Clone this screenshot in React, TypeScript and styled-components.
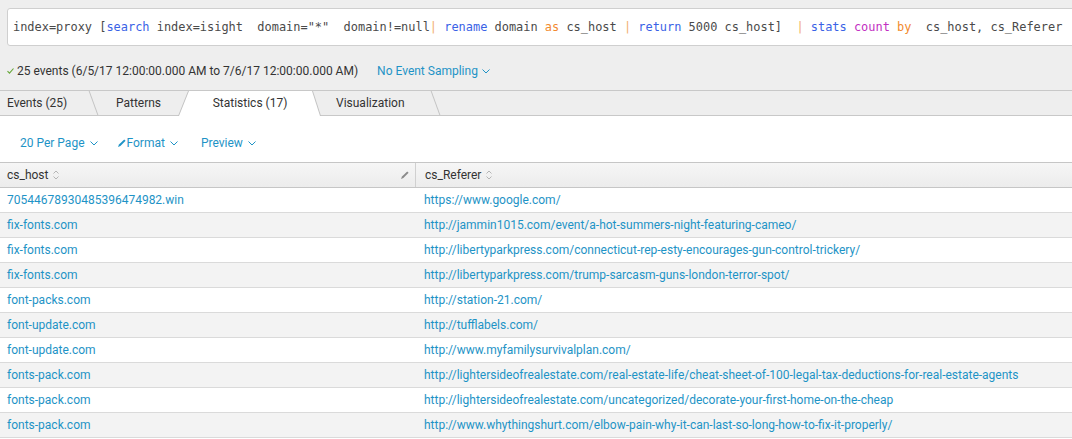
import React from "react";
import styled, { createGlobalStyle, css } from "styled-components";

const GlobalStyle = createGlobalStyle`
  html, body { margin: 0; padding: 0; background: #fff; overflow: hidden; }
  body { font-family: Roboto, "Liberation Sans", Arial, sans-serif; }
`;

const Page = styled.div`
  width: 1072px;
  height: 439px;
  overflow: hidden;
  background: #fff;
`;

const TopArea = styled.div`
  background: #eeeeee;
`;

const SearchWrap = styled.div`
  padding: 8px 0 0 7px;
`;

const SearchBox = styled.div`
  box-sizing: border-box;
  height: 38px;
  margin-right: -30px;
  background: #fff;
  border: 1px solid #cfcfcf;
  border-radius: 3px;
  display: flex;
  align-items: center;
  padding: 0 0 1px 5px;
  overflow: hidden;
`;

const SearchText = styled.span`
  font-family: "DejaVu Sans Mono", "Liberation Mono", monospace;
  font-size: 11.95px;
  color: #4a4a4a;
  white-space: pre;
`;

const Tok = styled.span<{ $k: "cmd" | "kw" | "fn" | "pipe" }>`
  color: ${(p) =>
    p.$k === "cmd" ? "#3a62e6" : p.$k === "kw" ? "#f28a2e" : p.$k === "fn" ? "#c22fc2" : "#f2ae6e"};
`;

const StatusRow = styled.div`
  height: 26px;
  margin-top: 12px;
  padding-left: 7px;
  display: flex;
  align-items: center;
  font-size: 12px;
  color: #333;
`;

const StatusText = styled.span`
  margin-left: 3px;
`;

const SamplingLink = styled.span`
  margin-left: 19px;
  color: #1e93c6;
  display: inline-flex;
  align-items: center;
  gap: 4px;
`;

const TabBar = styled.div`
  box-sizing: border-box;
  margin-top: 6px;
  height: 26px;
  border-top: 1px solid #c8c8c8;
  border-bottom: 1px solid #c8c8c8;
  display: flex;
  background: #eeeeee;
`;

const trapezoid = "polygon(10px 0, calc(100% - 8px) 0, 100% 100%, 0 100%)";

const Tab = styled.div<{ $w: number; $pl?: number; $active?: boolean; $sep?: boolean }>`
  position: relative;
  flex: none;
  box-sizing: border-box;
  width: ${(p) => p.$w}px;
  height: 100%;
  display: flex;
  align-items: center;
  justify-content: ${(p) => (p.$pl != null ? "flex-start" : "center")};
  padding-left: ${(p) => p.$pl ?? 0}px;
  font-size: 12px;
  color: #333;
  ${(p) =>
    p.$sep &&
    css`
      &::after {
        content: "";
        position: absolute;
        top: 0;
        bottom: 0;
        right: 0;
        width: 1px;
        background: #c3c3c3;
        transform: skewX(20deg);
      }
    `}
  ${(p) =>
    p.$active &&
    css`
      &::before {
        content: "";
        position: absolute;
        top: 0;
        bottom: -1px;
        left: -5px;
        right: -4px;
        background: #c3c3c3;
        clip-path: ${trapezoid};
      }
      &::after {
        content: "";
        position: absolute;
        top: 0;
        bottom: -1px;
        left: -4px;
        right: -3px;
        background: #fff;
        clip-path: ${trapezoid};
      }
    `}
`;

const TabLabel = styled.span`
  position: relative;
  z-index: 1;
`;

const Toolbar = styled.div`
  box-sizing: border-box;
  height: 46px;
  padding: 8px 0 0 20px;
  display: flex;
  align-items: center;
  gap: 20px;
`;

const DropButton = styled.span<{ $ml?: number }>`
  display: inline-flex;
  align-items: center;
  gap: 5px;
  font-size: 12px;
  color: #1e93c6;
  margin-left: ${(p) => p.$ml ?? 0}px;
`;

const FormatLabel = styled.span`
  display: inline-flex;
  align-items: center;
  gap: 1px;
`;

const Table = styled.div`
  width: 100%;
`;

const HeaderRow = styled.div`
  box-sizing: border-box;
  height: 26px;
  display: grid;
  grid-template-columns: 416px 1fr;
  border-top: 1px solid #c6c6c6;
  border-bottom: 1px solid #c6c6c6;
  background: linear-gradient(#f6f6f6, #ececec);
`;

const HeaderCell = styled.div<{ $first?: boolean }>`
  display: flex;
  align-items: center;
  justify-content: space-between;
  padding: 0 6px 0 ${(p) => (p.$first ? 7 : 9)}px;
  font-size: 12px;
  color: #333;
  ${(p) => p.$first && css`border-right: 1px solid #d0d0d0;`}
`;

const HeaderTitle = styled.span`
  display: inline-flex;
  align-items: center;
  gap: 5px;
`;

const Row = styled.div<{ $alt: boolean }>`
  box-sizing: border-box;
  height: 25px;
  display: grid;
  grid-template-columns: 416px 1fr;
  border-bottom: 1px solid #dadada;
  background: ${(p) => (p.$alt ? "#f3f3f3" : "#fff")};
`;

const Cell = styled.div<{ $first?: boolean }>`
  display: flex;
  align-items: center;
  padding-left: ${(p) => (p.$first ? 7 : 8)}px;
  font-size: 12px;
  color: #1e93c6;
  white-space: nowrap;
  overflow: hidden;
`;

const Chevron = ({ color = "#1e93c6" }: { color?: string }) => (
  <svg width="8" height="5" viewBox="0 0 8 5" style={{ display: "block" }}>
    <polyline points="0.5,0.5 4,4 7.5,0.5" fill="none" stroke={color} strokeWidth="1" />
  </svg>
);

const Check = () => (
  <svg width="7" height="6" viewBox="0 0 7 6" style={{ display: "block" }}>
    <polyline points="0.5,3.2 2.5,5.2 6.5,0.5" fill="none" stroke="#65a637" strokeWidth="1.1" />
  </svg>
);

const Pencil = ({ color }: { color: string }) => (
  <svg width="8" height="8" viewBox="0 0 8 8" style={{ display: "block" }}>
    <path d="M0 8 L1 5.6 L6.2 0.4 L7.6 1.8 L2.4 7 Z" fill={color} />
  </svg>
);

const SortIcon = () => (
  <svg width="6" height="10" viewBox="0 0 6 10" style={{ display: "block" }}>
    <polyline points="0.5,3.5 3,1 5.5,3.5" fill="none" stroke="#b5b5b5" strokeWidth="1" />
    <polyline points="0.5,6.5 3,9 5.5,6.5" fill="none" stroke="#b5b5b5" strokeWidth="1" />
  </svg>
);

const ROWS: [string, string][] = [
  ["70544678930485396474982.win", "https://www.google.com/"],
  ["fix-fonts.com", "http://jammin1015.com/event/a-hot-summers-night-featuring-cameo/"],
  ["fix-fonts.com", "http://libertyparkpress.com/connecticut-rep-esty-encourages-gun-control-trickery/"],
  ["fix-fonts.com", "http://libertyparkpress.com/trump-sarcasm-guns-london-terror-spot/"],
  ["font-packs.com", "http://station-21.com/"],
  ["font-update.com", "http://tufflabels.com/"],
  ["font-update.com", "http://www.myfamilysurvivalplan.com/"],
  [
    "fonts-pack.com",
    "http://lightersideofrealestate.com/real-estate-life/cheat-sheet-of-100-legal-tax-deductions-for-real-estate-agents",
  ],
  ["fonts-pack.com", "http://lightersideofrealestate.com/uncategorized/decorate-your-first-home-on-the-cheap"],
  ["fonts-pack.com", "http://www.whythingshurt.com/elbow-pain-why-it-can-last-so-long-how-to-fix-it-properly/"],
];

export default function App() {
  return (
    <Page>
      <GlobalStyle />
      <TopArea>
        <SearchWrap>
          <SearchBox>
            <SearchText>
              {"index=proxy ["}
              <Tok $k="cmd">search</Tok>
              {' index=isight  domain="*"  domain!=null'}
              <Tok $k="pipe">|</Tok>
              {" "}
              <Tok $k="cmd">rename</Tok>
              {" domain "}
              <Tok $k="kw">as</Tok>
              {" cs_host "}
              <Tok $k="pipe">|</Tok>
              {" "}
              <Tok $k="cmd">return</Tok>
              {" 5000 cs_host]  "}
              <Tok $k="pipe">|</Tok>
              {" "}
              <Tok $k="cmd">stats</Tok>
              {" "}
              <Tok $k="fn">count</Tok>
              {" "}
              <Tok $k="kw">by</Tok>
              {"  cs_host, cs_Referer"}
            </SearchText>
          </SearchBox>
        </SearchWrap>
        <StatusRow>
          <Check />
          <StatusText>25 events (6/5/17 12:00:00.000 AM to 7/6/17 12:00:00.000 AM)</StatusText>
          <SamplingLink>
            No Event Sampling
            <Chevron />
          </SamplingLink>
        </StatusRow>
        <TabBar>
          <Tab $w={94} $pl={7} $sep>
            <TabLabel>Events (25)</TabLabel>
          </Tab>
          <Tab $w={89}>
            <TabLabel>Patterns</TabLabel>
          </Tab>
          <Tab $w={134} $active>
            <TabLabel>Statistics (17)</TabLabel>
          </Tab>
          <Tab $w={119} $pl={19} $sep>
            <TabLabel>Visualization</TabLabel>
          </Tab>
        </TabBar>
      </TopArea>
      <Toolbar>
        <DropButton>
          20 Per Page
          <Chevron />
        </DropButton>
        <DropButton>
          <FormatLabel>
            <Pencil color="#1e93c6" />
            Format
          </FormatLabel>
          <Chevron />
        </DropButton>
        <DropButton $ml={3}>
          Preview
          <Chevron />
        </DropButton>
      </Toolbar>
      <Table>
        <HeaderRow>
          <HeaderCell $first>
            <HeaderTitle>
              cs_host
              <SortIcon />
            </HeaderTitle>
            <Pencil color="#8a8a8a" />
          </HeaderCell>
          <HeaderCell>
            <HeaderTitle>
              cs_Referer
              <SortIcon />
            </HeaderTitle>
          </HeaderCell>
        </HeaderRow>
        {ROWS.map(([host, ref], i) => (
          <Row key={i} $alt={i % 2 === 1}>
            <Cell $first>{host}</Cell>
            <Cell>{ref}</Cell>
          </Row>
        ))}
      </Table>
    </Page>
  );
}
